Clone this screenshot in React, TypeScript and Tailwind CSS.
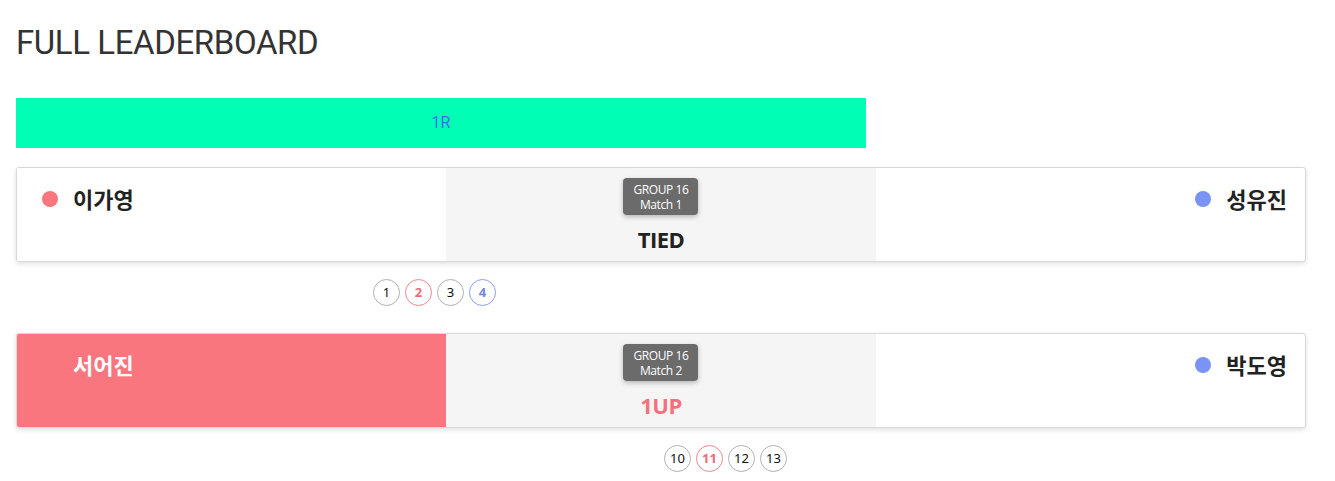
import React from 'react'

interface Hole {
  n: number
  winner?: 'red' | 'blue'
}

interface Match {
  no: number
  red: string
  blue: string
  result: string
  resultColor: string
  redLeading: boolean
  holes: Hole[]
  holesOffset: string
}

const matches: Match[] = [
  {
    no: 1,
    red: '이가영',
    blue: '성유진',
    result: 'TIED',
    resultColor: 'text-[#222222]',
    redLeading: false,
    holes: [{ n: 1 }, { n: 2, winner: 'red' }, { n: 3 }, { n: 4, winner: 'blue' }],
    holesOffset: 'pl-[357px]',
  },
  {
    no: 2,
    red: '서어진',
    blue: '박도영',
    result: '1UP',
    resultColor: 'text-[#f3707c]',
    redLeading: true,
    holes: [{ n: 10 }, { n: 11, winner: 'red' }, { n: 12 }, { n: 13 }],
    holesOffset: 'pl-[648px]',
  },
]

const nameFont = "font-['Noto_Sans_CJK_KR','Noto_Sans',sans-serif]"

function HoleCircle({ hole }: { hole: Hole }) {
  const tone =
    hole.winner === 'red'
      ? 'border-[#f3838d] text-[#f06a77] font-bold'
      : hole.winner === 'blue'
        ? 'border-[#8a9cf2] text-[#6f86f0] font-bold'
        : 'border-[#b0b0b0] text-[#111]'
  return (
    <div
      className={`w-[27px] h-[27px] rounded-full border flex items-center justify-center text-[13px] font-['Noto_Sans',sans-serif] ${tone}`}
    >
      {hole.n}
    </div>
  )
}

function MatchCard({ match }: { match: Match }) {
  return (
    <div className="mt-[19px] mb-[8px]">
      <div className="w-[1290px] h-[95px] grid grid-cols-3 border border-[#d9d9d9] rounded-[3px] shadow-[0_2px_5px_rgba(0,0,0,0.12)] overflow-hidden bg-white">
        <div className={match.redLeading ? 'bg-[#f9767f]' : 'bg-white'}>
          <div className="flex items-center h-[61px] pl-[25px]">
            <span className="w-[16px] h-[16px] rounded-full bg-[#f9767f]" />
            <span
              className={`ml-[15px] text-[22px] font-bold ${nameFont} ${match.redLeading ? 'text-white' : 'text-[#222]'}`}
            >
              {match.red}
            </span>
          </div>
        </div>
        <div className="bg-[#f5f5f5] flex flex-col items-center pt-[10px]">
          <div className="bg-[#6b6b6b] rounded-[4px] w-[75px] h-[37px] flex flex-col items-center justify-center text-white text-[12px] leading-[15px] tracking-[-0.4px] font-medium font-['Open_Sans',sans-serif] shadow-[0_2px_5px_rgba(0,0,0,0.25)]">
            <span>GROUP 16</span>
            <span>Match {match.no}</span>
          </div>
          <div
            className={`mt-[9px] text-[22px] font-bold leading-[30px] tracking-[-0.5px] font-['Open_Sans',sans-serif] ${match.resultColor}`}
          >
            {match.result}
          </div>
        </div>
        <div className="flex items-center justify-end h-[61px] pr-[18px]">
          <span className="w-[16px] h-[16px] rounded-full bg-[#7a93f5]" />
          <span className={`ml-[15px] text-[22px] font-bold text-[#222] ${nameFont}`}>{match.blue}</span>
        </div>
      </div>
      <div className={`flex gap-[5px] mt-[17px] ${match.holesOffset}`}>
        {match.holes.map((h) => (
          <HoleCircle key={h.n} hole={h} />
        ))}
      </div>
    </div>
  )
}

export default function App() {
  return (
    <div className="min-h-screen bg-white px-4 pt-[21px]">
      <h1 className="text-[33px] leading-[44px] text-[#333] font-['Roboto',sans-serif] font-normal tracking-[-0.4px]">
        FULL LEADERBOARD
      </h1>
      <div className="mt-[33px] w-[850px] h-[50px] bg-[#00ffb4] flex items-center justify-center text-[16px] text-[#3d6df5] font-['Roboto',sans-serif]">
        1R
      </div>
      <div className="flex flex-col">
        {matches.map((m) => (
          <MatchCard key={m.no} match={m} />
        ))}
      </div>
    </div>
  )
}
